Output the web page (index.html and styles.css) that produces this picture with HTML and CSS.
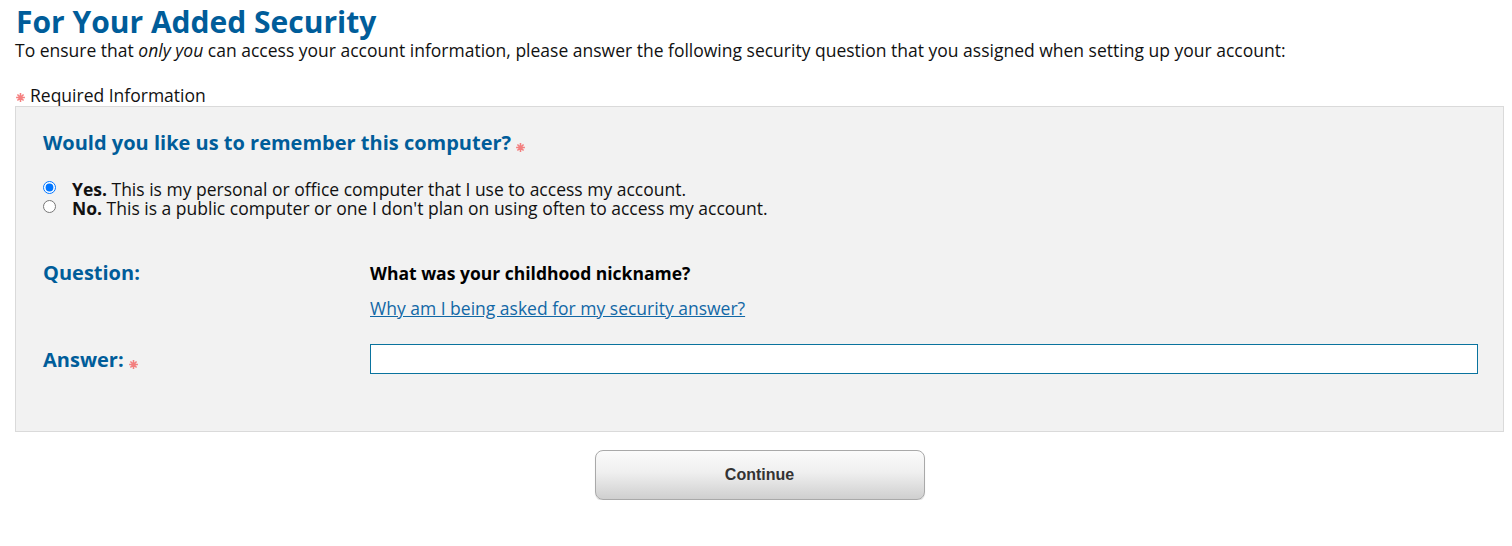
FILE: index.html
```html
<!DOCTYPE html>
<html lang="en">
<head>
    <meta charset="UTF-8">
    <meta name="viewport" content="width=device-width, initial-scale=1.0">
    <title>For Your Added Security</title>
    <link rel="stylesheet" href="styles.css">
</head>
<body>
    <div class="page">
        <h1>For Your Added Security</h1>
        <p class="intro">To ensure that <em>only you</em> can access your account information, please answer the following security question that you assigned when setting up your account:</p>

        <p class="required-note"><span class="req"><svg viewBox="0 0 10 10"><path d="M5 1v8M1 5h8M2.2 2.2l5.6 5.6M7.8 2.2l-5.6 5.6"/></svg></span>Required Information</p>

        <form class="security-box" action="#" method="POST">
            <h2>Would you like us to remember this computer?<span class="req"><svg viewBox="0 0 10 10"><path d="M5 1v8M1 5h8M2.2 2.2l5.6 5.6M7.8 2.2l-5.6 5.6"/></svg></span></h2>

            <div class="choices">
                <label class="choice"><input type="radio" name="remember" value="yes" checked><span><b>Yes.</b> This is my personal or office computer that I use to access my account.</span></label>
                <label class="choice"><input type="radio" name="remember" value="no"><span><b>No.</b> This is a public computer or one I don't plan on using often to access my account.</span></label>
            </div>

            <div class="qa-row question-row">
                <div class="qa-label">Question:</div>
                <div class="qa-value">
                    <div class="question-text">What was your childhood nickname?</div>
                    <a href="#" class="why-link">Why am I being asked for my security answer?</a>
                </div>
            </div>

            <div class="qa-row answer-row">
                <label class="qa-label" for="answer">Answer:<span class="req"><svg viewBox="0 0 10 10"><path d="M5 1v8M1 5h8M2.2 2.2l5.6 5.6M7.8 2.2l-5.6 5.6"/></svg></span></label>
                <div class="qa-value">
                    <input type="text" id="answer" name="answer">
                </div>
            </div>
        </form>

        <div class="actions">
            <button type="button" class="continue-btn">Continue</button>
        </div>
    </div>
</body>
</html>
```

FILE: styles.css
```css
body {
    font-family: 'Open Sans', 'Liberation Sans', sans-serif;
    background: #fff;
    margin: 0;
    padding: 0;
    color: #111;
}

.page {
    margin: 0 8px 0 15px;
    padding-top: 4px;
}

h1 {
    margin: 0;
    font-size: 30px;
    line-height: 36px;
    font-weight: 700;
    color: #005d9a;
    padding-left: 1px;
}

.intro {
    margin: 0;
    font-size: 17.5px;
    line-height: 20px;
}

.required-note {
    margin: 25px 0 0;
    font-size: 17.5px;
    line-height: 20px;
}

.req {
    display: inline-block;
    width: 11px;
    height: 11px;
    margin-right: 4px;
    vertical-align: -1px;
}

.req svg {
    display: block;
    width: 11px;
    height: 11px;
    stroke: #f46b6b;
    stroke-width: 1.4;
    fill: none;
    opacity: 0.85;
}

.security-box {
    margin: 1px 0 0;
    background: #f2f2f2;
    border: 1px solid #dadada;
    padding: 24px 25px 57px 27px;
}

h2 {
    margin: 0;
    font-size: 20px;
    line-height: 24px;
    font-weight: 700;
    color: #005d9a;
}

h2 .req, .qa-label .req {
    margin: 0 0 0 4px;
    vertical-align: -3px;
}

.choices {
    margin-top: 25px;
    font-size: 17.5px;
    line-height: 19px;
}

.choice {
    display: flex;
    align-items: flex-start;
}

.choice input {
    margin: 1px 16px 0 0;
    width: 13px;
    height: 13px;
}

.choice b {
    font-weight: 700;
}

.qa-row {
    display: grid;
    grid-template-columns: 327px 1fr;
    align-items: start;
}

.question-row {
    margin-top: 43px;
}

.answer-row {
    margin-top: 24px;
}

.qa-label {
    font-size: 20px;
    line-height: 24px;
    font-weight: 700;
    color: #005d9a;
}

.question-text {
    font-size: 17.5px;
    line-height: 24px;
    font-weight: 700;
    color: #000;
}

.why-link {
    display: inline-block;
    margin-top: 11px;
    font-size: 17.5px;
    line-height: 24px;
    color: #1268a6;
    text-decoration: underline;
}

.answer-row .qa-label {
    padding-top: 4px;
}

.qa-value input[type="text"] {
    box-sizing: border-box;
    display: block;
    width: 100%;
    height: 30px;
    margin: 0;
    padding: 4px 6px;
    border: 1px solid #0a739e;
    background: #fff;
    font-family: inherit;
    font-size: 16px;
}

.qa-value input[type="text"]:focus {
    outline: none;
}

.actions {
    display: flex;
    justify-content: center;
    margin-top: 18px;
}

.continue-btn {
    width: 330px;
    height: 50px;
    border: 1px solid #a9a9a9;
    border-radius: 8px;
    background: linear-gradient(to bottom, #fbfbfb 0%, #efefef 45%, #cfcfcf 100%);
    box-shadow: 0 1px 1px rgba(0, 0, 0, 0.15);
    font-family: 'Liberation Sans', Arial, sans-serif;
    font-size: 16px;
    font-weight: 700;
    color: #333;
    cursor: pointer;
}

.continue-btn:hover {
    background: linear-gradient(to bottom, #ffffff 0%, #f3f3f3 45%, #d8d8d8 100%);
}
```
